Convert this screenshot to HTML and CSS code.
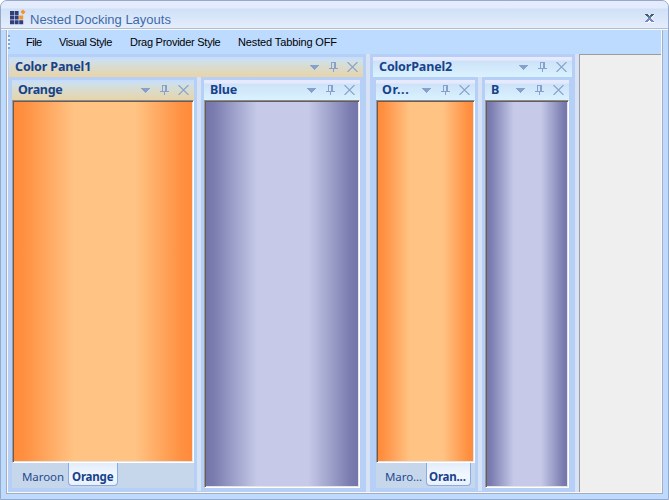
FILE: index.html
```html
<!DOCTYPE html>
<html lang="en">
<head>
<meta charset="utf-8">
<title>Nested Docking Layouts</title>
<link rel="stylesheet" href="styles.css">
</head>
<body>
<svg class="defs" width="0" height="0" aria-hidden="true">
  <symbol id="arrow" viewBox="0 0 9 5"><path d="M0 0H9V1H8V2H7V3H6V4H5V5H4V4H3V3H2V2H1V1H0Z" fill="#86a2cc"/></symbol>
  <symbol id="pin" viewBox="0 0 9 10"><path d="M2 .5H7M2.5 0V6M5.5 0V6M6.5 0V6M0 6.5H9M4.5 7V10" fill="none" stroke="#86a2cc"/></symbol>
  <symbol id="cross" viewBox="0 0 11 10"><path d="M.5 0L10.5 10M10.5 0L.5 10" fill="none" stroke="#86a2cc" stroke-width="1.1"/></symbol>
</svg>
<div class="window">
  <header class="titlebar">
    <svg class="logo" width="16" height="16" viewBox="0 0 16 16">
      <path d="M0 1h4v4H0zM4.600 1h4v4h-4zM0 5.600h4v4H0zM4.600 5.600h4v4h-4zM0 10.200h4v4H0zM4.600 10.200h4v4h-4zM9.200 10.200h4v4h-4z" fill="#303d78"/>
      <path d="M9.200 5.600h4v4h-4zM13 -.5l2.600 2.500-2.600 2.500-2.600-2.500z" fill="#f4942c"/>
    </svg>
    <span class="title">Nested Docking Layouts</span>
    <svg class="close" width="10" height="9" viewBox="0 0 10 9">
      <path d="M0 0.500H4L5 2 6 .5H10L6.500 4.500 10 9H6L5 7.500 4 9H0L3.500 4.500Z" fill="#fff" opacity=".8"/>
      <path d="M0 .5H3M6 .5H9M1 1.500H4M5 1.500H8" stroke="#4a5a68"/>
      <path d="M2 2.500H7M3 3.500H6" stroke="#4f8291"/>
      <path d="M3 4.500H6M2 5.500H7M1 6.500H4M5 6.500H8M0 7.500H3M6 7.500H9" stroke="#8184c4"/>
    </svg>
  </header>
  <div class="client">
    <nav class="menu"><i class="grip"></i><span class="m1">File</span><span class="m2">Visual Style</span><span class="m3">Drag Provider Style</span><span class="m4">Nested Tabbing OFF</span></nav>
    <main class="workspace">
      <section class="group first">
        <div class="caption tan"><b class="t-cp1">Color Panel1</b><span class="tools"><svg class="arrow"><use href="#arrow"/></svg><svg class="pin"><use href="#pin"/></svg><svg class="cross"><use href="#cross"/></svg></span></div>
        <div class="panes">
          <div class="pane w182">
            <div class="caption tan"><b class="t-orange">Orange</b><span class="tools"><svg class="arrow"><use href="#arrow"/></svg><svg class="pin"><use href="#pin"/></svg><svg class="cross"><use href="#cross"/></svg></span></div>
            <div class="fill orange"></div>
            <div class="tabs"><span class="tab">Maroon</span><span class="tab active">Orange</span></div>
          </div>
          <div class="splitter"></div>
          <div class="pane w156">
            <div class="caption"><b class="t-blue">Blue</b><span class="tools"><svg class="arrow"><use href="#arrow"/></svg><svg class="pin"><use href="#pin"/></svg><svg class="cross"><use href="#cross"/></svg></span></div>
            <div class="fill blue"></div>
          </div>
        </div>
      </section>
      <div class="splitter"></div>
      <section class="group second">
        <div class="caption"><b class="t-cp2">ColorPanel2</b><span class="tools"><svg class="arrow"><use href="#arrow"/></svg><svg class="pin"><use href="#pin"/></svg><svg class="cross"><use href="#cross"/></svg></span></div>
        <div class="panes">
          <div class="pane w99">
            <div class="caption"><b class="t-or">Or...</b><span class="tools"><svg class="arrow"><use href="#arrow"/></svg><svg class="pin"><use href="#pin"/></svg><svg class="cross"><use href="#cross"/></svg></span></div>
            <div class="fill orange"></div>
            <div class="tabs short"><span class="tab">Maro...</span><span class="tab active">Oran...</span></div>
          </div>
          <div class="splitter"></div>
          <div class="pane w84">
            <div class="caption"><b class="t-b">B</b><span class="tools"><svg class="arrow"><use href="#arrow"/></svg><svg class="pin"><use href="#pin"/></svg><svg class="cross"><use href="#cross"/></svg></span></div>
            <div class="fill blue"></div>
          </div>
        </div>
      </section>
      <div class="splitter"></div>
      <div class="document"></div>
    </main>
  </div>
</div>
</body>
</html>
```
FILE: styles.css
```css
* { box-sizing: border-box; }
body { margin: 0; background: #fff; overflow: hidden; font-family: "Liberation Sans", Arial, sans-serif; }
.defs { position: absolute; }
.window {
  width: 669px; height: 500px; display: flex; flex-direction: column;
  background: #bddbff; border: 1px solid #98a9c8;
  border-radius: 7px 7px 0 0; overflow: hidden;
}
.titlebar {
  height: 29px; flex: none; display: flex; align-items: flex-start;
  background: linear-gradient(#e4ecfd 0, #e3ebfc 7px, #cfe1f7 8px, #e4edfc 27px, #b5bccb 27px, #b5bccb 28px, #f4f8ff 28px);
}
.logo { margin: 9px 0 0 9px; flex: none; overflow: visible; }
.title { margin: 11px 0 0 4px; font-size: 13px; line-height: 16px; color: #3e6aaa; white-space: nowrap; }
.close { margin: 13px 13px 0 auto; flex: none; }
.client {
  width: 657px; height: 464px; margin-left: 5px; display: flex; flex-direction: column;
  border: 1px solid #a9adb8; border-top: 0;
  background: #bddbff; box-shadow: inset 1px -1px #f5f8fd, inset -1px 0 #f5f8fd;
  padding: 0 1px 1px;
}
.menu { height: 24px; flex: none; display: flex; align-items: center; font-size: 11px; color: #000; white-space: nowrap; }
.menu span { line-height: 14px; }
.grip { width: 2px; height: 14px; margin: 0 16px 0 0; background: repeating-linear-gradient(#7ba3dc 0 2px, #e8f2ff 2px 4px); }
.m1 { width: 33px; letter-spacing: -.5px; }
.m2 { width: 71px; letter-spacing: -.36px; }
.m3 { width: 108px; letter-spacing: -.26px; }
.m4 { letter-spacing: -.13px; }
.workspace { flex: 1; display: flex; min-height: 0; }
.group { background: #b5cff7; display: flex; flex-direction: column; padding-top: 3px; }
.first { width: 358px; }
.second { width: 205px; }
.group > .caption { margin: 0 3px; }
.first > .caption { margin-left: 1px; }
.panes { flex: 1; display: flex; min-height: 0; gap: 3px; padding-left: 4px; }
.second .panes { padding-left: 6px; }
.splitter { width: 4px; flex: none; background: #d7e3f5; }
.panes .splitter { margin-bottom: 1px; }
.pane { flex: none; display: flex; flex-direction: column; padding: 3px 0 4px; }
.w182 { width: 182px; }
.w156 { width: 156px; }
.w99 { width: 99px; }
.w84 { width: 84px; }
.caption {
  height: 20px; flex: none; display: flex; align-items: center; padding: 0 5px 0 6px;
  background: linear-gradient(#e8eaff 0, #e6eaff 3px, #cde2f8 4px, #daf2ff 100%);
  color: #16428b;
}
.caption.tan { background: linear-gradient(#c5dcfa 0, #cbdff5 3px, #d0e0e6 4px, #e8d4a8 100%); }
.caption b { font: bold 12.5px/18px "Noto Sans", "DejaVu Sans Condensed", sans-serif; white-space: nowrap; margin-top: -1px; letter-spacing: -.15px; }
.caption .t-or { letter-spacing: .7px; }
.caption .t-orange { letter-spacing: -.3px; }
.tools { margin-left: auto; display: flex; align-items: center; }
.arrow { width: 9px; height: 5px; margin-right: 10px; }
.pin { width: 9px; height: 10px; margin-right: 9px; }
.cross { width: 11px; height: 10px; }
.fill { flex: 1; border: 1px solid; border-color: #8c8c8c #fff #fff #9a9a9a; box-shadow: inset 1px 1px #665d58, inset -1px -1px #e7e5e3; }
.orange { background: linear-gradient(90deg, #ff8a3a 0, #ff9142 7%, #ffc384 34%, #ffc384 68%, #ff9142 93%, #ff8a3a 100%); }
.blue { background: linear-gradient(90deg, #7375a8 0, #7b7db0 6%, #c6cae8 34%, #c6cae8 67%, #7b7db0 94%, #7375a8 100%); }
.tabs { height: 25px; flex: none; display: flex; background: #c6d7ec; color: #284b8c; font: 11.5px/22px "Noto Sans", "DejaVu Sans Condensed", sans-serif; white-space: nowrap; }
.tab { padding: 3px 0 0 10px; width: 56px; height: 23px; letter-spacing: -.08px; }
.tab.active { width: 50px; padding-left: 3px; font-weight: bold; letter-spacing: -.2px; color: #16428b; background: linear-gradient(#e2edfb, #f3f8ff 60%, #e8f0fc); border: 1px solid #86aee5; border-top: 0; border-radius: 0 0 4px 4px; }
.short .tab { width: 50px; padding-left: 9px; }
.short .tab.active { width: 45px; padding-left: 2px; }
.document { flex: 1; background: #efefef; border-left: 1px solid #9c9c9c; border-top: 1px solid #9c9c9c; }
```
